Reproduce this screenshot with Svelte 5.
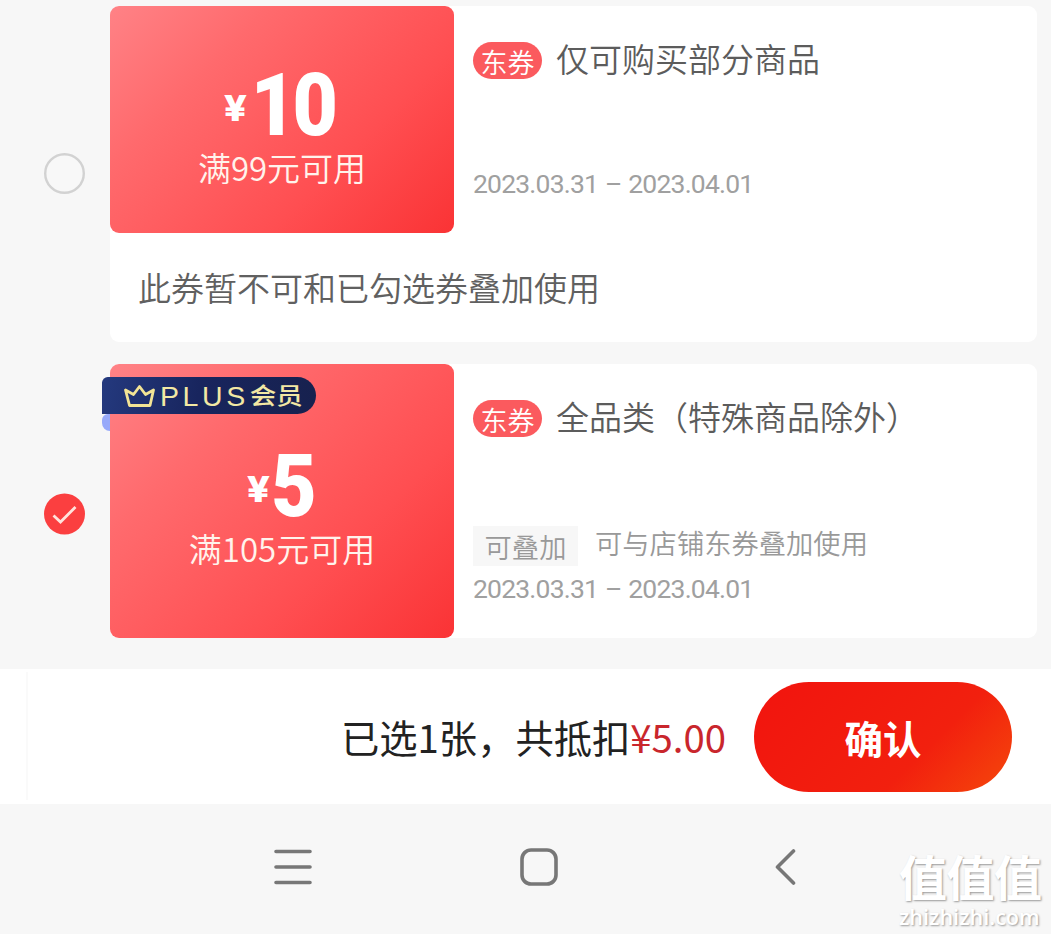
<script lang="ts">
  type Coupon = {
    id: number;
    amount: string;
    limit: string;
    title: string;
    period: string;
    plus?: boolean;
    stack?: string;
    notice?: string;
  };

  const coupons: Coupon[] = [
    {
      id: 1,
      amount: "10",
      limit: "满99元可用",
      title: "仅可购买部分商品",
      period: "2023.03.31 – 2023.04.01",
      notice: "此券暂不可和已勾选券叠加使用",
    },
    {
      id: 2,
      amount: "5",
      limit: "满105元可用",
      title: "全品类（特殊商品除外）",
      period: "2023.03.31 – 2023.04.01",
      plus: true,
      stack: "可与店铺东券叠加使用",
    },
  ];

  let selected = $state(2);
</script>

<div class="page">
  <main class="list">
    {#each coupons as c (c.id)}
      <div class="row" class:tall={c.plus}>
        <button class="radio" aria-label="选择" onclick={() => (selected = c.id)}>
          <svg width="42" height="42" viewBox="0 0 42 42">
            {#if selected === c.id}
              <circle cx="21.5" cy="21" r="20.5" fill="#fb3f40" />
              <path d="M10.5 22.5L17.5 29L32.5 14" fill="none" stroke="#ffe3dc" stroke-width="2.8" />
            {:else}
              <circle cx="21.5" cy="20.5" r="19.3" fill="#f8f8f8" stroke="#d2d2d2" stroke-width="2.4" />
            {/if}
          </svg>
        </button>

        <div class="card">
          <div class="top">
            <div class="value">
              {#if c.plus}
                <div class="plus">
                  <svg width="33" height="24" viewBox="0 0 33 24">
                    <path
                      d="M6.5 21.5L2.5 6L10.5 10.5L16.5 2.5L22.5 10.5L30.5 6L27 21.5Z"
                      fill="none"
                      stroke="#f3e495"
                      stroke-width="2.8"
                      stroke-linejoin="round"
                    />
                  </svg>
                  <span class="en">PLUS</span>
                  <span class="cn">会员</span>
                </div>
              {/if}
              <div class="amount"><span class="yen">¥</span><span class="num">{c.amount}</span></div>
              <div class="limit">{c.limit}</div>
            </div>

            <div class="info">
              <div class="title"><span class="tag">东券</span>{c.title}</div>
              <div class="meta">
                {#if c.stack}
                  <div class="stack"><span class="chip">可叠加</span><span class="hint">{c.stack}</span></div>
                {/if}
                <div class="period">{c.period}</div>
              </div>
            </div>
          </div>

          {#if c.notice}
            <div class="notice">{c.notice}</div>
          {/if}
        </div>
      </div>
    {/each}
  </main>

  <footer class="bar">
    <div class="total">已选1张，共抵扣<span>¥5.00</span></div>
    <button class="confirm">确认</button>
  </footer>

  <nav class="system">
    <svg width="38" height="36" viewBox="0 0 38 36">
      <path d="M2 2.5H36M2 18H36M2 33.5H36" />
    </svg>
    <svg class="home" width="38" height="38" viewBox="0 0 38 38">
      <rect x="2" y="2" width="34" height="34" rx="9" />
    </svg>
    <svg width="22" height="36" viewBox="0 0 22 36">
      <path d="M18.5 2L2.5 18L18.5 34" />
    </svg>
  </nav>

  <div class="watermark">
    <div class="mark">值值值</div>
    <div class="site">zhizhizhi.com</div>
  </div>
</div>

<style>
  :global(body) {
    background: #f7f7f7;
  }

  .page {
    position: relative;
    height: 934px;
    overflow: hidden;
    display: flex;
    flex-direction: column;
    background: #f7f7f7;
    font-family: "Noto Sans CJK SC", sans-serif;
  }

  button {
    border: none;
    padding: 0;
    background: none;
    font-family: inherit;
    cursor: pointer;
  }

  svg {
    display: block;
  }

  .list {
    height: 669px;
    box-sizing: border-box;
    padding: 6px 14px 0 43px;
    display: flex;
    flex-direction: column;
    gap: 22px;
  }

  .row {
    display: flex;
    align-items: center;
    gap: 25px;
  }

  .row.tall {
    --value-height: 274px;
  }

  .radio {
    width: 42px;
    height: 42px;
    flex: none;
  }

  .row.tall .radio {
    margin-top: 26px;
  }

  .card {
    flex: 1;
    background: #fff;
    border-radius: 9px;
  }

  .top {
    display: flex;
    height: var(--value-height, 227px);
  }

  .value {
    position: relative;
    width: 344px;
    flex: none;
    box-sizing: border-box;
    padding-top: 59px;
    border-radius: 9px;
    background: linear-gradient(135deg, #ff8286 0%, #ff6a6d 28%, #ff4e51 68%, #fa3335 100%);
    color: #fff;
    text-align: center;
  }

  .tall .value {
    padding-top: 82px;
  }

  .amount {
    display: flex;
    justify-content: center;
    align-items: center;
    height: 80px;
    font-weight: 700;
  }

  .yen {
    margin: 6px 5px 0 0;
    font: 800 36px/40px Inter, sans-serif;
    transform: scaleX(1.12);
  }

  .num {
    margin: 0 0 0 -5px;
    font: 900 87px/80px Roboto, sans-serif;
    letter-spacing: -4px;
    transform: scaleX(0.9);
  }

  .limit {
    font-size: 33px;
    line-height: 44px;
    color: #fff3ec;
    font-weight: 350;
  }

  .plus {
    position: absolute;
    left: -8px;
    top: 13px;
    width: 214px;
    height: 37px;
    box-sizing: border-box;
    padding-left: 21px;
    display: flex;
    align-items: center;
    border-radius: 6px 19px 19px 0;
    background: linear-gradient(100deg, #24397e, #18255e 45%, #17214e);
    color: #f3e8a4;
  }

  .plus::after {
    content: "";
    position: absolute;
    left: 0;
    top: 37px;
    width: 8px;
    height: 17px;
    border-radius: 6px 0 0 8px;
    background: #97a9fa;
  }

  .en {
    margin-left: 4px;
    font: 28.5px/36px "Liberation Sans", sans-serif;
    letter-spacing: 3.6px;
  }

  .cn {
    margin-left: 1px;
    font-size: 26.5px;
    line-height: 35px;
    font-weight: 500;
    transform: translateY(-1px) scaleY(0.86);
  }

  .info {
    flex: 1;
    display: flex;
    flex-direction: column;
    justify-content: space-between;
    padding: 31px 0 30px 19px;
  }

  .title {
    display: flex;
    align-items: center;
    height: 46px;
    font-size: 33px;
    line-height: 42px;
    padding-bottom: 4px;
    box-sizing: border-box;
    font-weight: 350;
    color: #5c5c5c;
  }

  .tag {
    width: 69px;
    height: 37px;
    margin: 4px 14px 0 0;
    border-radius: 19px;
    background: #fb5a5e;
    color: #fff;
    font-size: 27px;
    line-height: 39px;
    text-align: center;
  }

  .meta {
    color: #999;
  }

  .stack {
    display: flex;
    align-items: flex-start;
    height: 44px;
    font-size: 27.3px;
    font-weight: 350;
  }

  .chip {
    width: 105px;
    height: 40px;
    margin-right: 17px;
    background: #f7f7f7;
    line-height: 40px;
    text-align: center;
  }

  .hint {
    line-height: 33px;
  }

  .period {
    height: 38px;
    font: 400 26.5px/38px Roboto, sans-serif;
    letter-spacing: -0.8px;
    word-spacing: 1px;
    color: #a0a0a0;
  }

  .notice {
    height: 109px;
    padding-left: 28px;
    font-size: 33px;
    line-height: 108px;
    font-weight: 350;
    color: #606060;
  }

  .bar {
    position: relative;
    height: 135px;
    box-sizing: border-box;
    padding-right: 39px;
    display: flex;
    align-items: center;
    justify-content: flex-end;
    gap: 28px;
    background: #fff;
  }

  .bar::before {
    content: "";
    position: absolute;
    left: 26px;
    top: 3px;
    bottom: 4px;
    width: 2px;
    background: #fafafa;
  }

  .total {
    font-size: 38.3px;
    color: #222;
  }

  .total span {
    color: #c9262c;
  }

  .confirm {
    width: 258px;
    height: 110px;
    border-radius: 55px;
    background: linear-gradient(135deg, #f2140e 0%, #f2200e 65%, #f5480b 100%);
    color: #fff;
    font-size: 38.5px;
    font-weight: 700;
  }

  .system {
    flex: 1;
    display: flex;
    align-items: center;
    justify-content: space-between;
    padding: 0 254px 4px 274px;
  }

  .system svg {
    fill: none;
    stroke: #777;
    stroke-width: 3.6;
    stroke-linecap: round;
    stroke-linejoin: round;
  }

  .system .home {
    margin-right: 9px;
  }

  .watermark {
    position: absolute;
    right: 8px;
    bottom: 4px;
    width: 144px;
    white-space: nowrap;
    color: #fff;
    text-shadow: 1px 1px 2px #999;
  }

  .mark {
    margin-bottom: 5px;
    font-size: 48px;
    line-height: 48px;
    font-weight: 700;
    letter-spacing: -0.5px;
  }

  .site {
    font: 600 21.6px/26px "Open Sans", sans-serif;
  }
</style>
